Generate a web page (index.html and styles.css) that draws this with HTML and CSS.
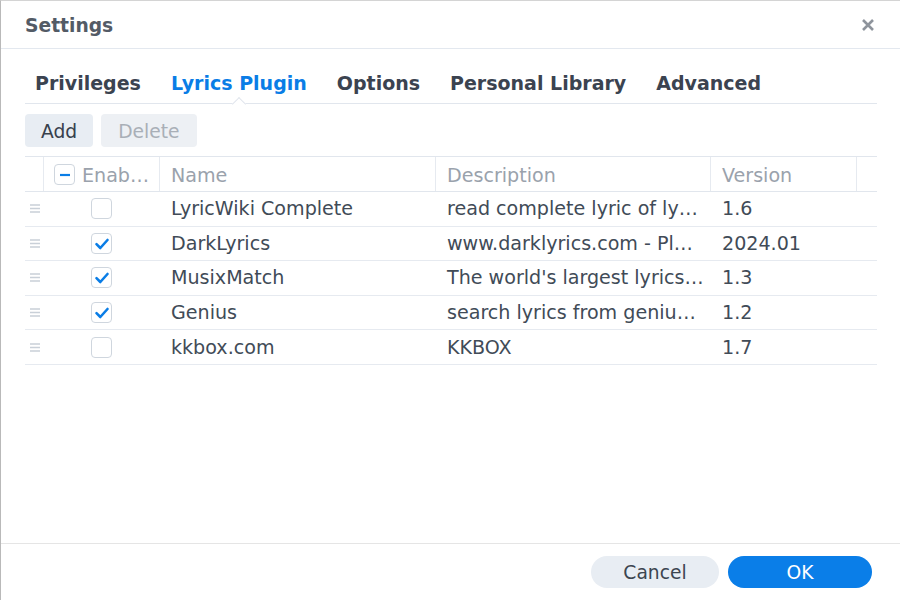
FILE: index.html
```html
<!DOCTYPE html>
<html>
<head>
<meta charset="utf-8">
<link rel="stylesheet" href="styles.css">
</head>
<body>
<div class="dialog">
  <div class="titlebar">
    <div class="title">Settings</div>
    <button class="close" aria-label="Close">
      <svg width="14" height="14" viewBox="0 0 14 14"><path d="M2 2 L12 12 M12 2 L2 12" stroke="#8e949c" stroke-width="2.6" stroke-linecap="butt"/></svg>
    </button>
  </div>
  <div class="content">
    <div class="tabs">
      <div class="tab">Privileges</div>
      <div class="tab active">Lyrics Plugin</div>
      <div class="tab">Options</div>
      <div class="tab">Personal Library</div>
      <div class="tab">Advanced</div>
    </div>
    <div class="toolbar">
      <button class="btn">Add</button>
      <button class="btn disabled">Delete</button>
    </div>
    <div class="grid">
      <div class="row head">
        <div class="cell c-handle"></div>
        <div class="cell c-enab"><span class="cb partial"><svg width="20" height="20" viewBox="0 0 20 20"><path d="M5 10 H15" stroke="#0a7de6" stroke-width="2.2"/></svg></span><span class="htext">Enabled</span></div>
        <div class="cell">Name</div>
        <div class="cell">Description</div>
        <div class="cell">Version</div>
        <div class="cell c-fill"></div>
      </div>
      <div class="row">
        <div class="cell c-handle"><svg width="10" height="9" viewBox="0 0 10 9"><path d="M0 1 H10 M0 4.5 H10 M0 8 H10" stroke="#c9d0d8" stroke-width="1.3"/></svg></div>
        <div class="cell c-enab"><span class="cb"></span></div>
        <div class="cell">LyricWiki Complete</div>
        <div class="cell desc">read complete lyric of lyricwiki</div>
        <div class="cell">1.6</div>
        <div class="cell c-fill"></div>
      </div>
      <div class="row">
        <div class="cell c-handle"><svg width="10" height="9" viewBox="0 0 10 9"><path d="M0 1 H10 M0 4.5 H10 M0 8 H10" stroke="#c9d0d8" stroke-width="1.3"/></svg></div>
        <div class="cell c-enab"><span class="cb"><svg width="20" height="20" viewBox="0 0 20 20"><path d="M4.5 10.2 L8.3 14 L15.5 6" fill="none" stroke="#0a7de6" stroke-width="2.6" stroke-linecap="round" stroke-linejoin="round"/></svg></span></div>
        <div class="cell">DarkLyrics</div>
        <div class="cell desc">www.darklyrics.com - Plugin for lyrics</div>
        <div class="cell">2024.01</div>
        <div class="cell c-fill"></div>
      </div>
      <div class="row">
        <div class="cell c-handle"><svg width="10" height="9" viewBox="0 0 10 9"><path d="M0 1 H10 M0 4.5 H10 M0 8 H10" stroke="#c9d0d8" stroke-width="1.3"/></svg></div>
        <div class="cell c-enab"><span class="cb"><svg width="20" height="20" viewBox="0 0 20 20"><path d="M4.5 10.2 L8.3 14 L15.5 6" fill="none" stroke="#0a7de6" stroke-width="2.6" stroke-linecap="round" stroke-linejoin="round"/></svg></span></div>
        <div class="cell">MusixMatch</div>
        <div class="cell desc">The world's largest lyrics catalog</div>
        <div class="cell">1.3</div>
        <div class="cell c-fill"></div>
      </div>
      <div class="row">
        <div class="cell c-handle"><svg width="10" height="9" viewBox="0 0 10 9"><path d="M0 1 H10 M0 4.5 H10 M0 8 H10" stroke="#c9d0d8" stroke-width="1.3"/></svg></div>
        <div class="cell c-enab"><span class="cb"><svg width="20" height="20" viewBox="0 0 20 20"><path d="M4.5 10.2 L8.3 14 L15.5 6" fill="none" stroke="#0a7de6" stroke-width="2.6" stroke-linecap="round" stroke-linejoin="round"/></svg></span></div>
        <div class="cell">Genius</div>
        <div class="cell desc">search lyrics from genius.com</div>
        <div class="cell">1.2</div>
        <div class="cell c-fill"></div>
      </div>
      <div class="row">
        <div class="cell c-handle"><svg width="10" height="9" viewBox="0 0 10 9"><path d="M0 1 H10 M0 4.5 H10 M0 8 H10" stroke="#c9d0d8" stroke-width="1.3"/></svg></div>
        <div class="cell c-enab"><span class="cb"></span></div>
        <div class="cell">kkbox.com</div>
        <div class="cell desc">KKBOX</div>
        <div class="cell">1.7</div>
        <div class="cell c-fill"></div>
      </div>
    </div>
  </div>
  <div class="footer">
    <button class="pill cancel">Cancel</button>
    <button class="pill ok">OK</button>
  </div>
</div>
</body>
</html>
```

FILE: styles.css
```css
* { box-sizing: border-box; }
html, body { margin: 0; padding: 0; }
body {
  width: 900px;
  height: 600px;
  background: #ffffff;
  font-family: "DejaVu Sans", Verdana, sans-serif;
  font-size: 18.7px;
  color: #414b57;
  overflow: hidden;
}
button { font-family: inherit; font-size: inherit; border: none; cursor: pointer; }

.dialog {
  width: 900px;
  height: 600px;
  display: flex;
  flex-direction: column;
  border-left: 1px solid #b9b9b9;
  border-top: 1px solid #d4d4d4;
  background: #fff;
}

.titlebar {
  height: 48px;
  flex: none;
  display: flex;
  align-items: center;
  justify-content: space-between;
  padding: 2px 24px 0 24px;
  border-bottom: 1px solid #e3e8ef;
}
.title {
  font-weight: bold;
  color: #535b66;
  line-height: 22px;
}
.close {
  background: none;
  padding: 0;
  width: 14px;
  height: 14px;
  margin-right: 1px;
  margin-top: -1px;
  display: flex;
}

.content {
  flex: 1;
  padding: 0 23px 0 24px;
}

.tabs {
  display: flex;
  gap: 30px;
  height: 55px;
  padding: 23px 0 0 10px;
  border-bottom: 1px solid #e1e6ed;
  font-size: 19px;
}
.tab {
  position: relative;
  font-weight: bold;
  color: #3b4350;
  line-height: 22px;
  height: 22px;
}
.tab.active { color: #0a7de6; }
.tab.active::after {
  content: "";
  position: absolute;
  left: 50%;
  bottom: -15px;
  width: 9px;
  height: 9px;
  margin-left: -5px;
  background: #fff;
  border-top: 1px solid #e1e6ed;
  border-left: 1px solid #e1e6ed;
  transform: rotate(45deg);
}

.toolbar {
  display: flex;
  gap: 8px;
  margin-top: 10px;
}
.btn {
  height: 33px;
  padding: 2px 16px 0;
  border-radius: 4px;
  background: #e8edf3;
  color: #38414d;
  line-height: 31px;
}
.btn.disabled {
  background: #edf0f4;
  color: #a9afb7;
  padding: 2px 17px 0;
}

.grid {
  margin-top: 9px;
  border-top: 1px solid #e1e6ed;
  font-size: 19.1px;
}
.row {
  display: grid;
  grid-template-columns: 19px 116px 276px 275px 146px 1fr;
  height: 34.6px;
  border-bottom: 1px solid #e6eaf0;
  align-items: center;
}
.row.head {
  height: 35px;
  border-bottom: 1px solid #e1e6ed;
  color: #9aa2ac;
  align-items: stretch;
}
.cell {
  padding: 1px 11px 0;
  white-space: nowrap;
  overflow: hidden;
  text-overflow: ellipsis;
  line-height: 22px;
}
.cell.desc { padding-right: 7px; }
.head .cell {
  display: flex;
  align-items: center;
  border-right: 1px solid #e6eaf0;
  padding-top: 3px;
}
.head .cell.c-fill { border-right: none; }
.head .cell.c-enab { padding: 3px 6px 0 10px; }
.head .cb { margin-top: -3px; }
.htext {
  overflow: hidden;
  text-overflow: ellipsis;
  white-space: nowrap;
  margin-left: 7px;
}
.c-handle {
  padding: 0 0 0 5px;
  display: flex;
  align-items: center;
}
.c-enab {
  display: flex;
  align-items: center;
  padding: 0;
}
.row:not(.head) .c-enab { justify-content: flex-start; padding: 0 0 0 47px; }
.cb {
  flex: none;
  width: 21px;
  height: 21px;
  border: 1px solid #cfd6de;
  border-radius: 4px;
  background: #fff;
  position: relative;
}
.cb svg { position: absolute; left: 0; top: 0; }

.footer {
  flex: none;
  height: 57px;
  border-top: 1px solid #e5e5e5;
  display: flex;
  justify-content: flex-end;
  align-items: flex-start;
  gap: 9px;
  padding: 12px 28px 0 0;
}
.pill {
  height: 32px;
  border-radius: 16px;
  line-height: 30px;
  padding: 2px 0 0;
}
.cancel {
  width: 128px;
  background: #e8edf3;
  color: #3c4550;
}
.ok {
  width: 144px;
  background: #0a7ee8;
  color: #fff;
}
```
